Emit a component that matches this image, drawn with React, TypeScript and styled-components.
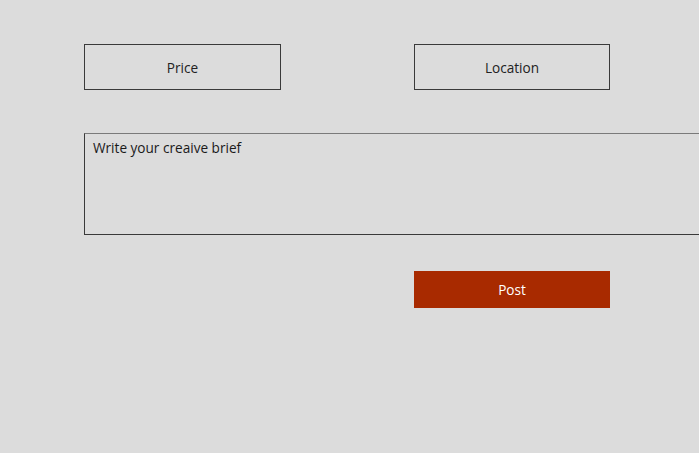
import React from "react";
import styled, { createGlobalStyle } from "styled-components";

const Global = createGlobalStyle`
  html, body { margin: 0; padding: 0; background: #dcdcdc; overflow: hidden; }
  body { font-family: "Open Sans", "Noto Sans", sans-serif; }
`;

const Page = styled.div`
  width: 699px;
  height: 453px;
  overflow: hidden;
  background: #dcdcdc;
  padding: 44px 0 0 84px;
  box-sizing: border-box;
  display: flex;
  flex-direction: column;
  align-items: flex-start;
`;

const FieldRow = styled.div`
  display: grid;
  grid-template-columns: 197px 196px;
  column-gap: 133px;
`;

const Field = styled.div`
  height: 46px;
  box-sizing: border-box;
  border: 1px solid #3a3a3a;
  display: flex;
  align-items: center;
  justify-content: center;
  font-size: 13.6px;
  color: #222;
`;

const Brief = styled.div`
  margin-top: 43px;
  width: 620px;
  flex-shrink: 0;
  height: 102px;
  box-sizing: border-box;
  border: 1px solid #3a3a3a;
  border-right: none;
  border-top-color: #7a7a7a;
  padding: 4px 8px;
  font-size: 13.6px;
  color: #1a1a1a;
  line-height: 20px;
`;

const PostButton = styled.button`
  margin: 36px 0 0 330px;
  width: 196px;
  height: 37px;
  border: none;
  background: #a82a00;
  color: #fff;
  font-family: "Open Sans", "Noto Sans", sans-serif;
  font-size: 13.6px;
  padding: 0;
  cursor: pointer;
`;

export default function App() {
  return (
    <>
      <Global />
      <Page>
        <FieldRow>
          <Field>Price</Field>
          <Field>Location</Field>
        </FieldRow>
        <Brief>Write your creaive brief</Brief>
        <PostButton>Post</PostButton>
      </Page>
    </>
  );
}
